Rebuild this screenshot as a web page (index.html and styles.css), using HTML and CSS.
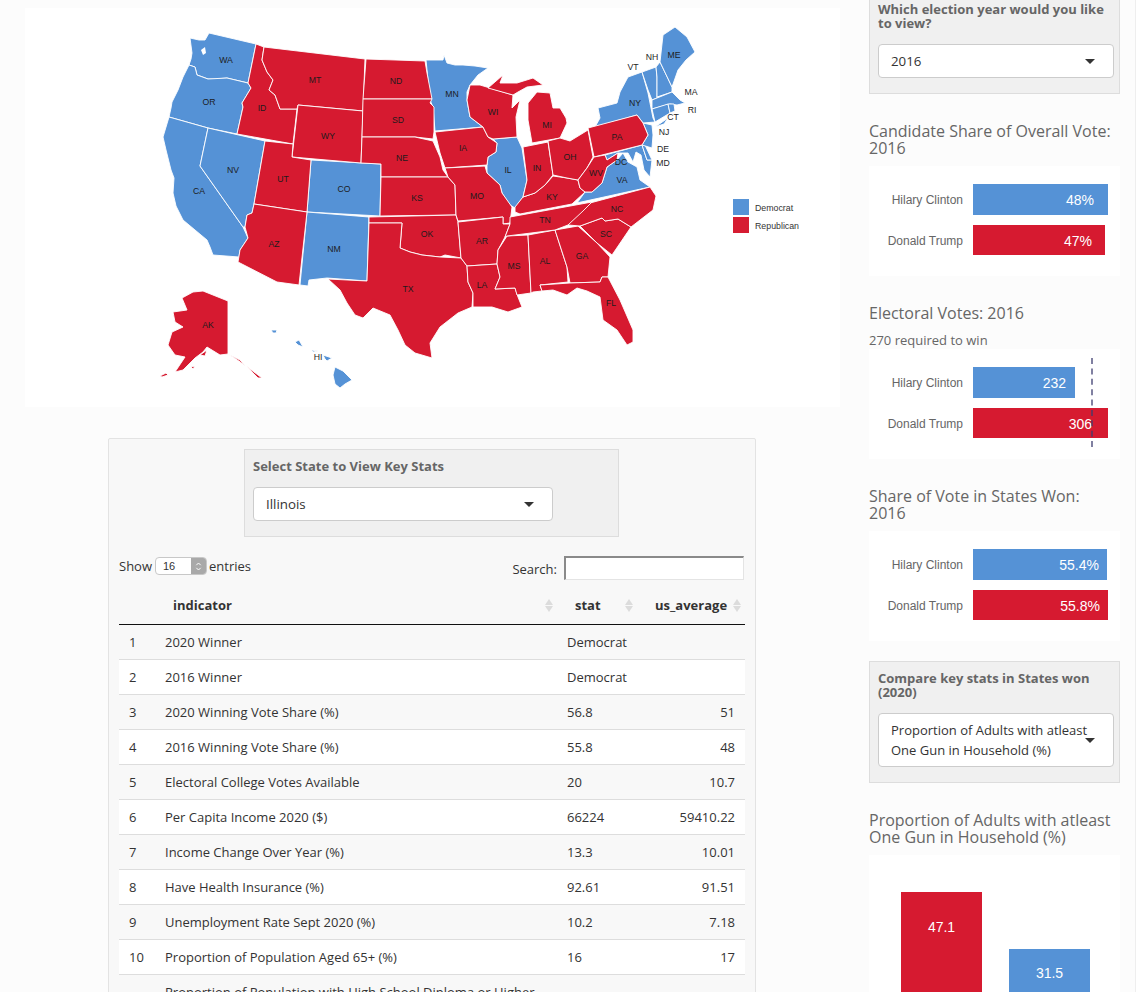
FILE: index.html
```html
<!DOCTYPE html>
<html lang="en">
<head>
<meta charset="utf-8">
<title>US Election Dashboard</title>
<link rel="stylesheet" href="styles.css">
</head>
<body>
<div class="page">
  <main class="left">
    <section class="map-panel">
      <svg class="map" viewBox="25 8 815 399" width="815" height="399" aria-label="US election map">
        <g class="blue">
          <polygon points="209,33 256,44 248,83 227,78 215,79 208,79 200,76 197,75 195,67 189,65 191,59 192,53 190,38 199,40 205,40"/>
          <polygon points="189,65 195,67 197,75 208,79 227,78 248,83 251,88 242,103 243,107 237,134 208,128 169,117 171,108 172,102 178,90 183,77"/>
          <polygon points="169,117 208,128 200,166 243,227 248,238 240,250 239,257 213,255 210,247 207,240 195,230 183,220 176,206 173,193 174,178 171,170 166,150 163,137"/>
          <polygon points="208,128 265,141 254,204 252,213 247,215 245,227 243,227 200,166"/>
          <polygon points="311,160 381,164 380,216 307,212"/>
          <polygon points="307,212 369,217 367,281 327,278 309,280 308,286 300,285"/>
          <polygon points="426,60 443,60 444,55 447,63 455,65 463,65 475,66 488,68 478,75 470,85 467,92 467,100 470,117 483,127 435,131 433,107 430,100"/>
          <polygon points="493,139 517,137 522,148 527,180 523,197 515,208 510,205 502,193 500,185 487,173 487,165 488,157 496,152 497,143"/>
          <polygon points="577,203 585,192 592,192 602,183 607,167 617,160 623,153 628,162 637,167 640,180 650,187 572,204"/>
          <polygon points="605,155 642,145 647,160 652,160 650,177 644,170 641,155 636,152 633,162 628,153 623,153 618,153 607,160"/>
          <polygon points="642,145 645,145 652,160 647,160"/>
          <polygon points="643,123 652,125 653,135 652,148 642,145 648,135"/>
          <polygon points="595,127 600,118 598,108 617,103 620,92 628,77 642,72 648,93 653,118 655,122 643,123 637,115"/>
          <polygon points="655,127 668,118 664,124"/>
          <polygon points="642,72 656,67 657,77 657,98 652,100 648,90"/>
          <polygon points="656,67 660,62 672,87 672,92 657,97 657,77"/>
          <polygon points="660,62 663,35 675,27 687,37 695,52 686,60 678,70 672,87"/>
          <polygon points="652,100 672,92 680,100 685,103 677,105 670,104 652,109"/>
          <polygon points="652,109 668,104 670,113 655,122"/>
          <polygon points="668,104 674,104 675,111 670,113"/>
          <polygon points="335,367 343,371 352,380 345,384 340,388 335,384 333,375"/>
          <polygon points="323,355 332,358 327,361 325,359"/>
          <polygon points="295,342 299,340 303,347 298,345"/>
          <polygon points="271,330 277,330 276,333 273,333"/>
          <polygon points="311,350 318,351 313,352"/>
        </g>
        <g class="red">
          <polygon points="256,44 264,47 262,60 267,72 273,80 269,90 275,95 280,109 297,109 293,144 237,134 243,107 242,103 251,88 248,83"/>
          <polygon points="264,47 365,59 363,111 298,105 297,109 280,109 275,95 269,90 273,80 267,72 262,60"/>
          <polygon points="298,105 363,111 361,163 292,157"/>
          <polygon points="265,141 293,144 292,157 311,160 307,212 254,204"/>
          <polygon points="254,204 307,212 299,285 277,282 238,262 240,250 248,238 245,227 247,215 252,213"/>
          <polygon points="366,59 425,61 427,73 432,99 363,99"/>
          <polygon points="363,99 432,99 430,103 434,107 434,132 433,139 415,137 362,137"/>
          <polygon points="362,137 415,137 433,141 440,157 443,170 448,177 381,177 381,164 361,163"/>
          <polygon points="381,177 448,177 455,185 456,215 380,216"/>
          <polygon points="369,217 456,215 458,222 461,258 445,255 440,257 422,255 410,252 400,248 402,223 369,223"/>
          <polygon points="369,223 402,223 400,248 410,252 422,255 440,257 461,258 467,266 468,282 473,293 472,307 458,313 440,327 430,343 432,358 415,353 405,345 398,330 390,315 373,308 363,318 355,315 347,303 340,290 328,279 367,281"/>
          <polygon points="435,132 483,127 488,137 497,143 496,152 488,157 487,165 445,168 440,153"/>
          <polygon points="445,168 485,166 487,173 500,185 502,193 512,207 510,223 503,224 503,217 458,221 456,215 455,185 448,177"/>
          <polygon points="458,222 503,217 503,224 510,224 505,237 498,250 497,264 467,266 461,258"/>
          <polygon points="467,266 497,264 500,277 495,289 515,288 518,297 522,307 508,312 492,307 473,307 473,293 468,282"/>
          <polygon points="507,236 528,235 531,293 517,295 515,288 495,289 500,277 497,264 498,250"/>
          <polygon points="528,235 555,230 567,267 568,282 540,285 542,291 533,292 531,293"/>
          <polygon points="555,230 578,226 597,243 610,257 608,277 602,277 600,282 570,283 567,267"/>
          <polygon points="540,285 570,283 600,282 602,277 608,277 620,300 633,330 633,342 627,345 617,330 603,320 600,297 587,291 577,288 567,295 553,290 542,291"/>
          <polygon points="580,226 602,218 605,221 618,219 631,227 612,255 597,243"/>
          <polygon points="568,225 577,215 590,203 650,187 656,196 653,210 631,227 618,219 605,221 602,218 580,226"/>
          <polygon points="510,217 592,202 583,211 568,225 555,230 507,236 505,237 510,224"/>
          <polygon points="515,207 523,197 535,193 545,185 553,176 567,178 578,180 580,188 585,192 572,204 520,214 515,212"/>
          <polygon points="523,147 548,142 553,175 545,185 535,193 523,197 527,180"/>
          <polygon points="470,85 480,85 490,88 513,95 512,108 520,100 516,117 517,137 493,139 488,137 483,127 470,117 467,100"/>
          <polygon points="488,88 503,75 500,83 517,83 533,78 543,85 527,87 518,92 513,95"/>
          <polygon points="532,143 528,120 528,103 537,92 550,93 553,108 560,108 566,118 567,123 560,138"/>
          <polygon points="548,141 560,138 570,141 588,130 593,157 587,168 578,180 567,178 553,175"/>
          <polygon points="588,128 637,115 643,123 648,135 642,145 594,157"/>
          <polygon points="594,157 605,155 607,160 618,153 617,160 607,167 602,183 592,192 585,192 580,188 578,180 587,168"/>
          <polygon points="182,298 193,292 203,291 228,301 228,354 220,355 207,347 203,352 195,358 183,370 175,372 185,357 175,355 168,345 172,332 183,327 175,322 173,312 187,310"/>
          <polygon points="228,354 233,357 246,366 254,372 262,378 258,378 250,370 240,360"/>
          <polygon points="160,376 166,373 168,375 162,377"/>
          <polygon points="191,367 195,366 193,369"/>
          <polygon points="200,355 207,350 205,356"/>
        </g>
        <polygon class="water" points="201,50 205,47 206,53 203,55"/>
        <g class="labels">
          <text x="226" y="63">WA</text><text x="315" y="83">MT</text><text x="396" y="84">ND</text>
          <text x="674" y="58">ME</text><text x="652" y="60">NH</text><text x="633" y="70">VT</text>
          <text x="209" y="105">OR</text><text x="262" y="111">ID</text><text x="328" y="139">WY</text>
          <text x="398" y="123">SD</text><text x="452" y="97">MN</text><text x="493" y="115">WI</text>
          <text x="547" y="128">MI</text><text x="635" y="106">NY</text><text x="691" y="95">MA</text>
          <text x="692" y="113">RI</text><text x="673" y="120">CT</text><text x="664" y="135">NJ</text>
          <text x="617" y="140">PA</text><text x="463" y="151">IA</text><text x="402" y="161">NE</text>
          <text x="233" y="173">NV</text><text x="283" y="182">UT</text><text x="344" y="192">CO</text>
          <text x="199" y="194">CA</text><text x="417" y="201">KS</text><text x="427" y="237">OK</text>
          <text x="508" y="173">IL</text><text x="537" y="171">IN</text><text x="570" y="160">OH</text>
          <text x="552" y="200">KY</text><text x="596" y="176">WV</text><text x="622" y="183">VA</text>
          <text x="621" y="165">DC</text><text x="663" y="152">DE</text><text x="663" y="166">MD</text>
          <text x="477" y="199">MO</text><text x="482" y="244">AR</text><text x="545" y="223">TN</text>
          <text x="617" y="212">NC</text><text x="606" y="237">SC</text><text x="582" y="259">GA</text>
          <text x="545" y="264">AL</text><text x="514" y="269">MS</text><text x="482" y="288">LA</text>
          <text x="408" y="292">TX</text><text x="274" y="247">AZ</text><text x="334" y="252">NM</text>
          <text x="611" y="306">FL</text><text x="208" y="328">AK</text><text x="318" y="360">HI</text>
        </g>
        <g class="legend">
          <rect class="swatch-blue" x="733" y="199" width="16" height="16"/>
          <rect class="swatch-red" x="733" y="217" width="16" height="16"/>
          <text x="755" y="211">Democrat</text>
          <text x="755" y="229">Republican</text>
        </g>
      </svg>
    </section>

    <section class="stats-panel">
      <div class="input-box state-box">
        <div class="input-label">Select State to View Key Stats</div>
        <div class="select state-select"><span>Illinois</span><i class="caret"></i></div>
      </div>

      <div class="dt-controls">
        <div class="dt-length">
          <span>Show</span>
          <span class="mini-select"><span class="mini-value">16</span><span class="mini-spin"><svg viewBox="0 0 8 12" width="7" height="11"><path d="M1.5 4.5 4 2l2.5 2.5M1.5 7.5 4 10l2.5-2.5"/></svg></span></span>
          <span>entries</span>
        </div>
        <div class="dt-search"><span>Search:</span><span class="search-input"></span></div>
      </div>

      <table class="dt">
        <colgroup><col class="c-idx"><col class="c-ind"><col class="c-stat"><col class="c-avg"></colgroup>
        <thead>
          <tr>
            <th></th>
            <th class="th-ind">indicator<i class="sort"></i></th>
            <th class="th-stat">stat<i class="sort"></i></th>
            <th class="th-avg">us_average<i class="sort"></i></th>
          </tr>
        </thead>
        <tbody>
          <tr><td>1</td><td>2020 Winner</td><td>Democrat</td><td class="num"></td></tr>
          <tr><td>2</td><td>2016 Winner</td><td>Democrat</td><td class="num"></td></tr>
          <tr><td>3</td><td>2020 Winning Vote Share (%)</td><td>56.8</td><td class="num">51</td></tr>
          <tr><td>4</td><td>2016 Winning Vote Share (%)</td><td>55.8</td><td class="num">48</td></tr>
          <tr><td>5</td><td>Electoral College Votes Available</td><td>20</td><td class="num">10.7</td></tr>
          <tr><td>6</td><td>Per Capita Income 2020 ($)</td><td>66224</td><td class="num">59410.22</td></tr>
          <tr><td>7</td><td>Income Change Over Year (%)</td><td>13.3</td><td class="num">10.01</td></tr>
          <tr><td>8</td><td>Have Health Insurance (%)</td><td>92.61</td><td class="num">91.51</td></tr>
          <tr><td>9</td><td>Unemployment Rate Sept 2020 (%)</td><td>10.2</td><td class="num">7.18</td></tr>
          <tr><td>10</td><td>Proportion of Population Aged 65+ (%)</td><td>16</td><td class="num">17</td></tr>
          <tr><td></td><td>Proportion of Population with High School Diploma or Higher (%)</td><td></td><td class="num"></td></tr>
        </tbody>
      </table>
    </section>
  </main>

  <aside class="right">
    <div class="input-box year-box">
      <div class="input-label">Which election year would you like to view?</div>
      <div class="select year-select"><span>2016</span><i class="caret"></i></div>
    </div>

    <h3 class="heading h-first">Candidate Share of Overall Vote: 2016</h3>
    <div class="chart">
      <div class="bar-row"><span class="bar-label">Hilary Clinton</span><span class="bar blue-bar b48">48%</span></div>
      <div class="bar-row row-b"><span class="bar-label">Donald Trump</span><span class="bar red-bar b47">47%</span></div>
    </div>

    <h3 class="heading h-second">Electoral Votes: 2016</h3>
    <p class="sub">270 required to win</p>
    <div class="chart chart-line">
      <div class="bar-row"><span class="bar-label">Hilary Clinton</span><span class="bar blue-bar b232">232</span></div>
      <div class="bar-row row-b"><span class="bar-label">Donald Trump</span><span class="bar red-bar b306">306</span></div>
      <i class="threshold"></i>
    </div>

    <h3 class="heading h-third">Share of Vote in States Won: 2016</h3>
    <div class="chart">
      <div class="bar-row"><span class="bar-label">Hilary Clinton</span><span class="bar blue-bar b554">55.4%</span></div>
      <div class="bar-row row-b"><span class="bar-label">Donald Trump</span><span class="bar red-bar b558">55.8%</span></div>
    </div>

    <div class="input-box compare-box">
      <div class="input-label">Compare key stats in States won (2020)</div>
      <div class="select select-tall"><span>Proportion of Adults with atleast One Gun in Household (%)</span><i class="caret"></i></div>
    </div>

    <h3 class="heading h-fourth">Proportion of Adults with atleast One Gun in Household (%)</h3>
    <div class="chart column-chart">
      <div class="column col-red"><span>47.1</span></div>
      <div class="column col-blue"><span>31.5</span></div>
    </div>
  </aside>
</div>
</body>
</html>
```
FILE: styles.css
```css
html, body {
  margin: 0;
  height: 992px;
  overflow: hidden;
}
body {
  box-sizing: border-box;
  background: #fcfcfc;
  border-right: 1px solid #eee;
  color: #333;
  font-family: "Open Sans", "Liberation Sans", sans-serif;
  font-size: 13px;
}
.page {
  display: grid;
  grid-template-columns: 869px 251px;
  height: 992px;
  overflow: hidden;
}

/* map */
.left { min-width: 0; }
.map-panel {
  margin: 8px 29px 0 25px;
  height: 399px;
  background: #fff;
}
.map { display: block; }
.blue polygon, .red polygon {
  stroke: #fff;
  stroke-width: 0.9;
  stroke-linejoin: round;
}
.blue polygon { fill: #5592d6; }
.red polygon { fill: #d61a30; }
.water { fill: #fff; }
.labels { opacity: 0.99; }
.labels text {
  font-family: "Liberation Sans", Arial, sans-serif;
  font-size: 8.7px;
  text-anchor: middle;
  fill: #1c1c1c;
}
.legend { opacity: 0.99; }
.legend text {
  font-family: "Liberation Sans", Arial, sans-serif;
  font-size: 8.8px;
  fill: #333;
}
.swatch-blue { fill: #5592d6; }
.swatch-red { fill: #d61a30; }

/* stats */
.stats-panel {
  box-sizing: border-box;
  width: 648px;
  margin: 31px 0 0 108px;
  padding: 10px 10px 0;
  height: 700px;
  background: #f8f8f8;
  border: 1px solid #e3e3e3;
  border-radius: 2px;
}
.input-box {
  box-sizing: border-box;
  background: #f0f0f0;
  border: 1px solid #ddd;
}
.input-label {
  font-size: 13px;
  line-height: 14px;
  font-weight: 700;
  color: #666;
}
.state-box {
  width: 375px;
  height: 88px;
  margin-left: 125px;
  padding: 9px 8px 0 8px;
}
.select {
  position: relative;
  box-sizing: border-box;
  height: 34px;
  margin-top: 13px;
  padding: 0 32px 0 12px;
  display: flex;
  align-items: center;
  background: #fff;
  border: 1px solid #ccc;
  border-radius: 4px;
  font-size: 13.3px;
  color: #333;
}
.state-select { width: 300px; margin-top: 14px; }
.year-select { margin-top: 14px; }
.caret {
  position: absolute;
  right: 18px;
  top: 14px;
  width: 0;
  height: 0;
  border-left: 5px solid transparent;
  border-right: 5px solid transparent;
  border-top: 5px solid #333;
}

.dt-controls {
  display: flex;
  justify-content: space-between;
  align-items: flex-start;
  margin-top: 20px;
  height: 33px;
}
.dt-length {
  display: flex;
  align-items: center;
  height: 18px;
}
.mini-select {
  display: flex;
  box-sizing: border-box;
  width: 52px;
  height: 18px;
  margin: 0 2px 0 3px;
  background: #fff;
  border: 1px solid #c8c8c8;
  border-radius: 4px;
  overflow: hidden;
  font-family: "Liberation Sans", Arial, sans-serif;
  font-size: 11px;
  line-height: 16px;
}
.mini-value { flex: 1; padding-left: 7px; }
.mini-spin {
  width: 15px;
  background: #a9a9a9;
  display: flex;
  align-items: center;
  justify-content: center;
}
.mini-spin path { fill: none; stroke: #fff; stroke-width: 1.1; }
.dt-search {
  display: flex;
  align-items: center;
  gap: 7px;
  margin-top: -1px;
}
.search-input {
  box-sizing: border-box;
  width: 180px;
  height: 24px;
  margin-right: 1px;
  background: #fff;
  border-style: solid;
  border-width: 2px 1px 1px 2px;
  border-color: #8a8a8a #e4e4e4 #e4e4e4 #8a8a8a;
}
.dt-search span:first-child { padding-top: 1px; }

.dt {
  width: 626px;
  border-collapse: collapse;
  table-layout: fixed;
  font-size: 13px;
}
.c-idx { width: 36px; }
.c-ind { width: 402px; }
.c-stat { width: 88px; }
.c-avg { width: 100px; }
.dt th {
  position: relative;
  height: 34px;
  padding: 0 0 4px;
  box-sizing: border-box;
  text-align: left;
  font-weight: 700;
  border-bottom: 1px solid #111;
}
.th-ind { padding-left: 18px !important; }
.th-stat { padding-left: 18px !important; }
.th-avg { padding-left: 10px !important; white-space: nowrap; }
.sort {
  position: absolute;
  right: 4px;
  top: 9px;
  width: 0;
  height: 0;
  border-left: 4.5px solid transparent;
  border-right: 4.5px solid transparent;
  border-bottom: 6px solid #dcdcdc;
}
.sort::after {
  content: "";
  position: absolute;
  left: -4.5px;
  top: 7px;
  width: 0;
  height: 0;
  border-left: 4.5px solid transparent;
  border-right: 4.5px solid transparent;
  border-top: 6px solid #dcdcdc;
}
.th-stat .sort { right: 12px; }
.dt td {
  box-sizing: border-box;
  height: 35px;
  padding: 8px 10px;
  line-height: 18px;
  border-bottom: 1px solid #ddd;
}
.dt td:nth-child(3) { padding-left: 10px; }
.dt tbody tr:nth-child(even) { background: #fff; }
.dt .num { text-align: right; }

/* right column */
.right { width: 251px; }
.year-box {
  height: 94px;
  padding: 2px 5px 0 8px;
  border-top: 0;
}
.heading {
  margin: 29px 0 0;
  font-size: 16px;
  line-height: 17px;
  font-weight: 400;
  color: #666;
}
.sub {
  margin: 10px 0 0;
  height: 17px;
  line-height: 16px;
  font-size: 13px;
  color: #666;
}
.chart {
  position: relative;
  box-sizing: border-box;
  height: 110px;
  margin-top: 9px;
  padding-top: 18px;
  background: #fff;
}
.chart-line { margin-top: 0; }
.bar-row {
  display: flex;
  align-items: center;
  height: 31px;
}
.row-b { margin-top: 10px; height: 30px; }
.row-b .bar-label, .row-b .bar { padding-top: 1px; }
.bar-label {
  width: 94px;
  margin-right: 10px;
  text-align: right;
  font-family: "Liberation Sans", Arial, sans-serif;
  font-size: 12px;
  color: #666;
  white-space: nowrap;
}
.bar {
  box-sizing: border-box;
  height: 100%;
  display: flex;
  align-items: center;
  justify-content: flex-end;
  font-family: "Liberation Sans", Arial, sans-serif;
  font-size: 14px;
  color: #fff;
}
.blue-bar { background: #5592d6; }
.red-bar { background: #d61a30; }
.b48 { width: 135px; padding-right: 14px; }
.b47 { width: 132px; padding-right: 13px; }
.b232 { width: 102px; padding-right: 9px; }
.b306 { width: 135px; padding-right: 16px; }
.b554 { width: 134px; padding-right: 8px; }
.b558 { width: 135px; padding-right: 8px; }
.threshold {
  position: absolute;
  left: 222px;
  top: 9px;
  height: 89px;
  border-left: 2px dashed rgba(60, 60, 110, 0.65);
}
.compare-box {
  height: 122px;
  margin-top: 20px;
  padding: 9px 5px 0 8px;
}
.select-tall {
  height: 54px;
  margin-top: 14px;
  padding-right: 8px;
  line-height: 20px;
  font-size: 13px;
}
.select-tall .caret { top: 24px; }
.column-chart { height: 200px; }
.column {
  position: absolute;
  box-sizing: border-box;
  width: 81px;
  height: 200px;
  text-align: center;
  font-family: "Liberation Sans", Arial, sans-serif;
  font-size: 14px;
  color: #fff;
}
.col-red { left: 32px; top: 37px; background: #d61a30; padding-top: 27px; }
.col-blue { left: 140px; top: 94px; background: #5592d6; padding-top: 16px; }
```
